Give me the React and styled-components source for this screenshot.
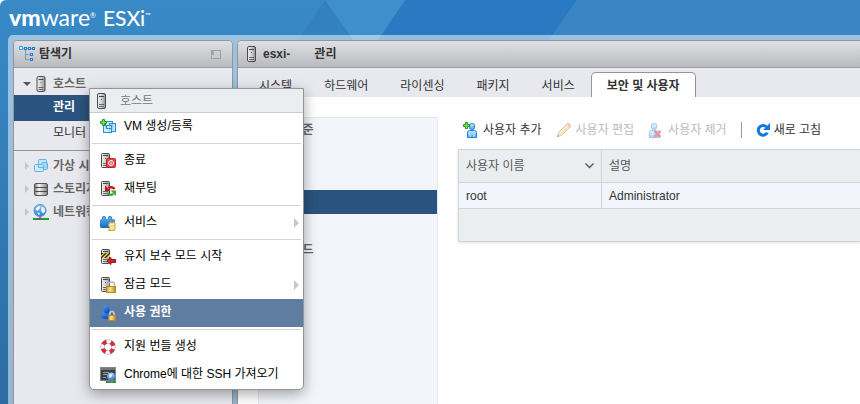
import React, { useState } from "react";
import styled, { createGlobalStyle, css } from "styled-components";

const tabs = [
  "시스템",
  "하드웨어",
  "라이센싱",
  "패키지",
  "서비스",
  "보안 및 사용자",
];

const sections = ["허용 수준", "인증", "인증서", "사용자", "역할", "잠금 모드"];

const users = [{ name: "root", description: "Administrator" }];

function Gradients() {
  return (
    <HiddenSvg aria-hidden="true">
      <defs>
        <linearGradient id="server-metal">
          <stop offset="0" stopColor="#eeeeee" />
          <stop offset="0.5" stopColor="#d2d2d2" />
          <stop offset="1" stopColor="#8f8f8f" />
        </linearGradient>
        <linearGradient id="storage-metal">
          <stop offset="0" stopColor="#7a7a7a" />
          <stop offset="0.35" stopColor="#f8f8f8" />
          <stop offset="1" stopColor="#7c7c7c" />
        </linearGradient>
        <linearGradient id="person-blue" x2="0" y2="1">
          <stop offset="0" stopColor="#c5f1ff" />
          <stop offset="1" stopColor="#3f9ffa" />
        </linearGradient>
        <linearGradient id="admin-blue" x2="0.5" y2="1">
          <stop offset="0" stopColor="#4da0ff" />
          <stop offset="1" stopColor="#0b48b8" />
        </linearGradient>
        <linearGradient id="globe-blue" x2="0" y2="1">
          <stop offset="0" stopColor="#9bcbf3" />
          <stop offset="1" stopColor="#2f78d6" />
        </linearGradient>
        <linearGradient id="brick-blue" x2="0" y2="1">
          <stop offset="0" stopColor="#4aa3ea" />
          <stop offset="1" stopColor="#1767b8" />
        </linearGradient>
        <linearGradient id="lock-gold">
          <stop offset="0" stopColor="#c79a2c" />
          <stop offset="0.4" stopColor="#fbe48e" />
          <stop offset="1" stopColor="#b98a1c" />
        </linearGradient>
      </defs>
    </HiddenSvg>
  );
}

function ServerIcon() {
  return (
    <svg width="9" height="16" viewBox="0 0 9 16" aria-hidden="true">
      <rect
        x="0.5"
        y="0.5"
        width="8"
        height="15"
        rx="1.5"
        fill="url(#server-metal)"
        stroke="#4a4a4a"
      />
      <path d="M2 3.5h5" stroke="#444" />
      <path d="M4 6.5h1" stroke="#666" />
      <path d="M2 11.5h5M2 13.5h5" stroke="#666" />
    </svg>
  );
}

function ServerShape() {
  return (
    <>
      <rect
        x="1.5"
        y="0.5"
        width="8"
        height="14"
        rx="1"
        fill="url(#server-metal)"
        stroke="#4a4a4a"
      />
      <path d="M3 2.5h5" stroke="#444" />
      <path d="M5 5.5h1" stroke="#666" />
      <path d="M3 10.5h5M3 12.5h5" stroke="#666" />
    </>
  );
}

function Icon({ size = 16, children }) {
  return (
    <svg
      width={size}
      height={size}
      viewBox="0 0 16 16"
      fill="none"
      aria-hidden="true"
    >
      {children}
    </svg>
  );
}

function NavigatorIcon() {
  return (
    <Icon>
      <path d="M3 2.5h11M6.5 3v10.5h4M6.5 8.5h4" stroke="#7c99b8" />
      <rect x="0.5" y="0.5" width="3" height="3" fill="#dff4ff" stroke="#35a6e8" />
      <g fill="#d4e9ff" stroke="#1c78d8">
        <rect x="5.5" y="1.5" width="2" height="2" />
        <rect x="9.5" y="1.5" width="2" height="2" />
        <rect x="13.5" y="1.5" width="2" height="2" />
        <rect x="11.5" y="7.5" width="2" height="2" />
        <rect x="11.5" y="12.5" width="2" height="2" />
      </g>
    </Icon>
  );
}

function MachinesIcon() {
  return (
    <Icon>
      <g stroke="#5fb4e8">
        <rect x="5.5" y="1.5" width="8" height="8" rx="1" fill="#c3e6fb" />
        <rect x="8.5" y="4.5" width="6" height="7" rx="1" fill="#9fd3f6" fillOpacity="0.7" />
        <rect x="1.5" y="6.5" width="9" height="7" rx="1" fill="#c9ebfd" fillOpacity="0.75" />
        <path d="M5.5 7v2.5H10" />
      </g>
    </Icon>
  );
}

function PlusShape() {
  return (
    <path
      d="M2.5 0.5h2v2h2v2h-2v2h-2v-2h-2v-2h2z"
      fill="#6fe65c"
      stroke="#1f9a24"
    />
  );
}

function NewMachineIcon() {
  return (
    <Icon>
      <g stroke="#2b8fd0">
        <rect x="5.5" y="2.5" width="7" height="7" fill="#d3efff" />
        <rect x="9.5" y="4.5" width="6" height="8" fill="#aadbf8" fillOpacity="0.8" />
        <rect x="3.5" y="6.5" width="8" height="7" fill="#c6e9fc" fillOpacity="0.8" />
        <path d="M6.5 7v2.5h5" />
      </g>
      <PlusShape />
    </Icon>
  );
}

function StorageIcon() {
  return (
    <Icon>
      <rect
        x="1.5"
        y="2.5"
        width="13"
        height="12"
        rx="1.5"
        fill="url(#storage-metal)"
        stroke="#555"
      />
      <path d="M2 6.5h12M2 10.5h12" stroke="#4c4c4c" />
    </Icon>
  );
}

function NetworkIcon() {
  return (
    <Icon>
      <path d="M0 15h16" stroke="#16a81c" strokeWidth="2" />
      <path d="M4 15h6" stroke="#666" strokeWidth="2" />
      <path d="M7 12v2" stroke="#888" strokeWidth="2" />
      <circle cx="7" cy="6.5" r="6" fill="url(#globe-blue)" stroke="#4b8fd4" />
      <path
        d="M2.5 5q2-3.5 5-3l-1 3-2 2zM8.5 3l3 0.5 0.5 4-2 2-2-3zM4 8.5l3 0.5-1 2.5z"
        fill="#e6f4ff"
      />
    </Icon>
  );
}

function ShutdownIcon() {
  return (
    <Icon>
      <ServerShape />
      <rect x="6.5" y="5.5" width="9" height="9" rx="1" fill="#e64348" stroke="#c0242a" />
      <circle cx="11" cy="10" r="2.5" stroke="#fff" />
      <path d="M11 8.5v3" stroke="#fff" />
    </Icon>
  );
}

function RebootIcon() {
  return (
    <Icon>
      <ServerShape />
      <path d="M14.5 8q-2.5-3-6-1" stroke="#c8151d" strokeWidth="2.5" />
      <path d="M5 4.5V10h5.5z" fill="#c8151d" />
      <path d="M7.5 12q2.5 3 6 1" stroke="#3da935" strokeWidth="2.5" />
      <path d="M16 15V9.5h-5.5z" fill="#3da935" />
    </Icon>
  );
}

function ServicesIcon() {
  return (
    <Icon>
      <g fill="#5fa9df" stroke="#2875b5">
        <rect x="2.5" y="1.5" width="3" height="3" rx="1" />
        <rect x="8.5" y="1.5" width="3" height="3" rx="1" />
      </g>
      <path d="M1 4h13l1 1v8H1l-1-1V5z" fill="url(#brick-blue)" />
      <path
        d="M9.5 7.5h5l1 1.5-1 2 1 1.5-1 3h-6l1-3-1-2z"
        fill="#f7dc88"
        stroke="#cfa54a"
      />
      <path d="M10 9.5h4M10 13h4" stroke="#fff1c0" />
    </Icon>
  );
}

function MaintenanceIcon() {
  return (
    <Icon>
      <ServerShape />
      <path d="M1 4h9v5H1z" fill="#2b2b2b" />
      <path
        d="M2 9l5-5h2L4 9zM6 9l4-4v2.5L8.5 9zM1 6.5L3.5 4H5L1 8z"
        fill="#f5d83a"
      />
      <path
        d="M7 12l4-3.5v2h4.5v3H11v2z"
        fill="#d3222a"
        stroke="#93141a"
      />
    </Icon>
  );
}

function LockdownIcon() {
  return (
    <Icon>
      <ServerShape />
      <path
        d="M8.5 10V7.5Q8.5 5 11.5 5T14.5 7.5V10"
        stroke="#b5b5b5"
        strokeWidth="1.5"
      />
      <rect x="6.5" y="9.5" width="9" height="6" fill="url(#lock-gold)" stroke="#b58b28" />
    </Icon>
  );
}

function PermissionsIcon() {
  return (
    <Icon>
      <path d="M1 12q0-4 3-5h6q3 1 3 5-1 2-6 2t-6-2z" fill="url(#admin-blue)" />
      <ellipse cx="6.5" cy="4.5" rx="3" ry="4" fill="url(#admin-blue)" />
      <path
        d="M10 10V8.5Q10 6.5 12 6.5T14 8.5V10"
        stroke="#c9ccd2"
        strokeWidth="1.5"
      />
      <rect x="8.5" y="10.5" width="7" height="5" fill="url(#lock-gold)" stroke="#b58b28" />
    </Icon>
  );
}

function SupportIcon() {
  return (
    <Icon>
      <circle cx="8" cy="8" r="5.5" stroke="#bdbdbd" strokeWidth="4.5" />
      <circle cx="8" cy="8" r="5.5" stroke="#fafafa" strokeWidth="3" />
      <circle
        cx="8"
        cy="8"
        r="5.5"
        stroke="#cf2f3a"
        strokeWidth="4"
        strokeDasharray="4.32 4.32"
        strokeDashoffset="-2.16"
      />
    </Icon>
  );
}

function ConsoleIcon() {
  return (
    <Icon>
      <rect x="0.5" y="0.5" width="15" height="13" fill="#3a3f44" stroke="#868686" />
      <path d="M1 2h14" stroke="#aaa" />
      <path d="M3 5.5h6M3 7.5h4M3 10.5h3" stroke="#9a9a9a" />
      <path d="M6 15h10" stroke="#17a520" strokeWidth="2" />
      <path d="M9 15h4" stroke="#777" strokeWidth="2" />
      <circle cx="11" cy="9.5" r="4" fill="url(#globe-blue)" />
      <path d="M9 7.5l3.5-0.5-1 3-2 1.5z" fill="#e6f4ff" />
    </Icon>
  );
}

function PersonShape() {
  return (
    <g fill="url(#person-blue)" stroke="#2c80dc">
      <path d="M4.5 15.5v-5q0-2 2-2h5q2 0 2 2v5z" />
      <rect x="6.5" y="1.5" width="5" height="6" rx="2" />
    </g>
  );
}

function AddUserIcon() {
  return (
    <Icon>
      <PersonShape />
      <path d="M7 11v4M11 11v4" stroke="#d9f3ff" />
      <PlusShape />
    </Icon>
  );
}

function EditIcon() {
  return (
    <Icon>
      <path
        d="M1.5 14.5l1-4 9-9q3-0.5 3 3l-9 9z"
        fill="#f5c66b"
        stroke="#a98040"
      />
      <path d="M3.5 11.5l8.5-8.5" stroke="#fff2cc" />
      <path d="M10.5 2.5l3 3 1-2-2-2z" fill="#d98a80" />
      <path d="M1 15l0.5-2.5 2 2z" fill="#555" />
    </Icon>
  );
}

function RemoveUserIcon() {
  return (
    <Icon>
      <g transform="translate(-3 0)">
        <PersonShape />
      </g>
      <path d="M6.5 9l6 6M12.5 9l-6 6" stroke="#d01820" strokeWidth="2.5" />
    </Icon>
  );
}

function RefreshIcon() {
  return (
    <Icon size={14}>
      <path
        d="M12 4.5A5.5 5.5 0 1 0 13 11"
        stroke="#1478e0"
        strokeWidth="3.5"
      />
      <path d="M16 0v8H8z" fill="#1478e0" />
    </Icon>
  );
}

const menuGroups = [
  [{ label: "VM 생성/등록", icon: NewMachineIcon }],
  [
    { label: "종료", icon: ShutdownIcon },
    { label: "재부팅", icon: RebootIcon },
  ],
  [{ label: "서비스", icon: ServicesIcon, submenu: true }],
  [
    { label: "유지 보수 모드 시작", icon: MaintenanceIcon },
    { label: "잠금 모드", icon: LockdownIcon, submenu: true },
    { label: "사용 권한", icon: PermissionsIcon },
  ],
  [
    { label: "지원 번들 생성", icon: SupportIcon },
    { label: "Chrome에 대한 SSH 가져오기", icon: ConsoleIcon },
  ],
];

function Backdrop() {
  return (
    <BackdropSvg aria-hidden="true">
      <path d="M325 0L298 40H354z" fill="#3481c0" />
      <path d="M405 0H577L549 40H377z" fill="#2a7ac3" />
      <path d="M325 0h80l-39 58z" fill="#3f8fcd" />
      <path d="M577 0H4000V60H535z" fill="#3a84c3" />
    </BackdropSvg>
  );
}

function ContextMenu() {
  const [hovered, setHovered] = useState("사용 권한");
  return (
    <Menu role="menu" aria-label="호스트">
      <MenuTitle>
        <ServerIcon />
        호스트
      </MenuTitle>
      {menuGroups.map((group, i) => (
        <MenuGroup key={i}>
          {group.map(({ label, icon: ItemIcon, submenu }) => (
            <MenuItem
              key={label}
              role="menuitem"
              type="button"
              $active={hovered === label}
              onMouseEnter={() => setHovered(label)}
            >
              <ItemIcon />
              <span>{label}</span>
              {submenu && <SubmenuArrow />}
            </MenuItem>
          ))}
        </MenuGroup>
      ))}
    </Menu>
  );
}

function Navigator() {
  return (
    <NavPanel>
      <NavPanelHeader>
        <NavigatorIcon />
        <PanelTitle>탐색기</PanelTitle>
        <CollapseButton type="button" aria-label="탐색기 축소">
          <svg width="10" height="9" viewBox="0 0 10 9" fill="none">
            <rect x="0.5" y="0.5" width="9" height="8" stroke="#a2a3a7" />
            <path d="M1 1h2v4H1z" fill="#a2a3a7" />
          </svg>
        </CollapseButton>
      </NavPanelHeader>
      <Tree>
        <TreeNode type="button">
          <Twisty $open />
          <ServerIcon />
          <span>호스트</span>
        </TreeNode>
        <TreeLeaf href="#manage" $selected>
          관리
        </TreeLeaf>
        <TreeLeaf href="#monitor">모니터</TreeLeaf>
        <TreeDivider />
        <TreeNode type="button">
          <Twisty />
          <MachinesIcon />
          <span>가상 시스템</span>
        </TreeNode>
        <TreeNode type="button">
          <Twisty />
          <StorageIcon />
          <span>스토리지</span>
        </TreeNode>
        <TreeNode type="button">
          <Twisty />
          <NetworkIcon />
          <span>네트워킹</span>
        </TreeNode>
      </Tree>
    </NavPanel>
  );
}

function UserTable() {
  return (
    <Table>
      <colgroup>
        <NameColumn />
        <col />
      </colgroup>
      <thead>
        <tr>
          <HeadCell>
            <HeadLabel>
              사용자 이름
              <svg width="9" height="6" viewBox="0 0 9 6" fill="none" aria-hidden="true">
                <path d="M0.5 0.5l4 4 4-4" stroke="#555" strokeWidth="1.3" />
              </svg>
            </HeadLabel>
          </HeadCell>
          <HeadCell>설명</HeadCell>
        </tr>
      </thead>
      <tbody>
        {users.map((user) => (
          <tr key={user.name}>
            <Cell>{user.name}</Cell>
            <Cell>{user.description}</Cell>
          </tr>
        ))}
      </tbody>
      <tfoot>
        <tr>
          <FootCell colSpan={2} />
        </tr>
      </tfoot>
    </Table>
  );
}

function App() {
  const [tab, setTab] = useState("보안 및 사용자");
  return (
    <Page>
      <GlobalStyle />
      <Gradients />
      <Backdrop />
      <Masthead>
        <Brand>
          <strong>vm</strong>ware<Mark>®</Mark>
        </Brand>
        <Product>
          ESXi<Mark>™</Mark>
        </Product>
      </Masthead>
      <Workspace>
        <Navigator />
        <MainPanel>
          <PanelHeader>
            <ServerIcon />
            <HostTitle>
              <span>esxi-</span>
              <span>관리</span>
            </HostTitle>
          </PanelHeader>
          <TabBar role="tablist">
            {tabs.map((label) => (
              <Tab
                key={label}
                role="tab"
                type="button"
                aria-selected={tab === label}
                $active={tab === label}
                onClick={() => setTab(label)}
              >
                {label}
              </Tab>
            ))}
          </TabBar>
          <Content>
            <SectionNav>
              {sections.map((label) => (
                <SectionLink
                  key={label}
                  href="#section"
                  $selected={label === "사용자"}
                >
                  {label}
                </SectionLink>
              ))}
            </SectionNav>
            <UsersPane>
              <Toolbar>
                <ToolButton type="button">
                  <AddUserIcon />
                  사용자 추가
                </ToolButton>
                <ToolButton type="button" disabled>
                  <EditIcon />
                  사용자 편집
                </ToolButton>
                <ToolButton type="button" disabled>
                  <RemoveUserIcon />
                  사용자 제거
                </ToolButton>
                <ToolDivider />
                <ToolButton type="button">
                  <RefreshIcon />
                  새로 고침
                </ToolButton>
              </Toolbar>
              <UserTable />
            </UsersPane>
          </Content>
        </MainPanel>
      </Workspace>
      <ContextMenu />
    </Page>
  );
}

const GlobalStyle = createGlobalStyle`
  * {
    box-sizing: border-box;
  }
  body {
    margin: 0;
    background: #fff;
    color: #333;
    font: 12px/16px "Liberation Sans", "Noto Sans CJK KR", sans-serif;
  }
  button {
    padding: 0;
    border: 0;
    background: none;
    color: inherit;
    font: inherit;
    text-align: left;
    white-space: nowrap;
  }
  a {
    color: inherit;
    text-decoration: none;
  }
  svg {
    flex: none;
  }
`;

const HiddenSvg = styled.svg`
  position: absolute;
  width: 0;
  height: 0;
`;

const Page = styled.div`
  position: relative;
  display: flex;
  flex-direction: column;
  min-height: 100vh;
  overflow: hidden;
  border-top-left-radius: 6px;
  background: linear-gradient(#388ac7, #2c6ca4);
`;

const BackdropSvg = styled.svg`
  position: absolute;
  top: 0;
  left: 0;
  width: 100%;
  height: 60px;
`;

const Masthead = styled.header`
  position: relative;
  display: flex;
  align-items: baseline;
  gap: 7px;
  height: 35px;
  padding: 0 9px;
  color: #fff;
  font-family: Lato, sans-serif;
  line-height: 34px;
  white-space: nowrap;
`;

const Brand = styled.span`
  font-size: 23px;

  strong {
    font-weight: 900;
  }
`;

const Product = styled.span`
  font-size: 21px;
  font-weight: 500;
`;

const Mark = styled.sup`
  font-size: 7px;
  line-height: 7px;
  vertical-align: 8px;
`;

const Workspace = styled.div`
  position: relative;
  display: flex;
  flex: 1;
  gap: 4px;
  margin-left: 8px;
  padding: 5px 0 0 5px;
  border-top-left-radius: 5px;
  background: rgba(255, 255, 255, 0.5);
`;

const Panel = styled.section`
  display: flex;
  flex-direction: column;
  overflow: hidden;
  border: 1px solid #949599;
  border-bottom: 0;
  border-radius: 5px 5px 0 0;
`;

const NavPanel = styled(Panel)`
  flex: none;
  width: 220px;
  background: #e8e9ee;
`;

const MainPanel = styled(Panel)`
  flex: 1;
  min-width: 0;
  border-right: 0;
  border-top-right-radius: 0;
  background: #fff;
`;

const PanelHeader = styled.header`
  display: flex;
  align-items: center;
  gap: 7px;
  height: 27px;
  padding: 0 11px 0 9px;
  border-bottom: 1px solid #9c9da0;
  background: linear-gradient(#dfe0e4, #b9babd);
  font-weight: bold;
  white-space: nowrap;
`;

const NavPanelHeader = styled(PanelHeader)`
  gap: 4px;
  padding-left: 5px;
`;

const PanelTitle = styled.span`
  flex: 1;
`;

const HostTitle = styled.span`
  display: flex;
  gap: 24px;
`;

const CollapseButton = styled.button`
  display: flex;
`;

const Tree = styled.nav`
  display: flex;
  flex-direction: column;
  padding-top: 4px;
`;

const TreeNode = styled.button`
  display: flex;
  align-items: center;
  height: 23px;
  padding-left: 9px;
  color: #666;
  font-weight: bold;

  > svg {
    width: 16px;
    margin-right: 4px;
  }
`;

const Twisty = styled.i`
  width: 10px;
  ${(props) =>
    props.$open
      ? css`
          border: solid transparent;
          border-width: 4px 4px 0;
          border-top-color: #555;
          width: 8px;
          margin-right: 2px;
        `
      : css`
          &::before {
            content: "";
            display: block;
            width: 0;
            margin-left: 2px;
            border: solid transparent;
            border-width: 4px 0 4px 4px;
            border-left-color: #c5c6ca;
          }
        `}
`;

const TreeLeaf = styled.a`
  padding: 4px 0 4px 39px;
  ${(props) =>
    props.$selected &&
    css`
      padding-bottom: 6px;
      background: #2a547f;
      color: #fff;
      font-weight: bold;
    `}
`;

const TreeDivider = styled.hr`
  width: 100%;
  margin: 5px 0 3px;
  border: 0;
  border-top: 1px solid #949599;
`;

const TabBar = styled.div`
  display: flex;
  align-items: flex-end;
  height: 29px;
  padding-left: 5px;
  background: #e8e9ee;
`;

const Tab = styled.button`
  height: 25px;
  padding: 2px 15px 0;
  border: 1px solid transparent;
  border-bottom: 0;
  border-radius: 5px 5px 0 0;
  ${(props) =>
    props.$active &&
    css`
      border-color: #949599;
      background: #fff;
      font-weight: bold;
    `}
`;

const Content = styled.div`
  display: flex;
  flex: 1;
  gap: 20px;
  padding: 20px 0 0 20px;
`;

const SectionNav = styled.nav`
  flex: none;
  width: 180px;
  border: 1px solid #e4e7ee;
  border-bottom: 0;
  background: #f2f5fa;
`;

const SectionLink = styled.a`
  display: block;
  padding: 4px 7px;
  color: #666;
  font-weight: bold;
  ${(props) =>
    props.$selected &&
    css`
      background: #2a547f;
      color: #fff;
    `}
`;

const UsersPane = styled.div`
  flex: 1;
  min-width: 0;
`;

const Toolbar = styled.div`
  display: flex;
  align-items: center;
  gap: 14px;
  height: 25px;
  margin-bottom: 7px;
  padding-left: 5px;
`;

const ToolButton = styled.button`
  display: flex;
  align-items: center;
  gap: 4px;

  &:disabled {
    color: #bbb;
  }
  &:disabled svg {
    opacity: 0.45;
  }
`;

const ToolDivider = styled.span`
  width: 1px;
  height: 16px;
  background: #999;
`;

const Table = styled.table`
  width: 100%;
  table-layout: fixed;
  border-collapse: collapse;
  box-shadow: 0 1px 3px rgba(0, 0, 0, 0.12);
`;

const NameColumn = styled.col`
  width: 143px;
`;

const HeadCell = styled.th`
  height: 33px;
  padding: 0 7px;
  border: 1px solid #d3d4d6;
  border-right-width: 0;
  background: #ebeef1;
  color: #565656;
  font-weight: normal;
  text-align: left;
`;

const HeadLabel = styled.span`
  display: flex;
  align-items: center;
  justify-content: space-between;
`;

const Cell = styled.td`
  height: 26px;
  padding: 0 7px;
  border-left: 1px solid #d3d4d6;
  background: #f2f5fb;
`;

const FootCell = styled.td`
  height: 33px;
  border: 1px solid #d3d4d6;
  border-right: 0;
  background: #ebeef1;
`;

const Menu = styled.div`
  position: absolute;
  top: 88px;
  left: 89px;
  width: 215px;
  overflow: hidden;
  border: 1px solid #949599;
  border-radius: 0 0 5px 5px;
  background: #fff;
  box-shadow: 0 4px 14px rgba(0, 0, 0, 0.35);
  color: #000;
`;

const MenuTitle = styled.div`
  display: flex;
  align-items: center;
  gap: 14px;
  height: 24px;
  padding-left: 7px;
  border-bottom: 1px solid #c8cbd0;
  background: #ebeef1;
  color: #777;
`;

const MenuGroup = styled.div`
  & + &::before {
    content: "";
    display: block;
    margin: 2px 2px 3px;
    border-top: 1px solid #d3d4d6;
  }
`;

const MenuItem = styled.button`
  display: flex;
  align-items: center;
  gap: 8px;
  width: 100%;
  height: 28px;
  padding: 0 4px 2px 10px;

  span {
    flex: 1;
  }
  svg {
    margin-top: 2px;
  }
  ${(props) =>
    props.$active &&
    css`
      background: #5f7da0;
      color: #fff;
      font-weight: bold;
    `}
`;

const SubmenuArrow = styled.i`
  margin-top: 2px;
  border: solid transparent;
  border-width: 5px 0 5px 5px;
  border-left-color: #c8c8c8;
`;

export default App;
